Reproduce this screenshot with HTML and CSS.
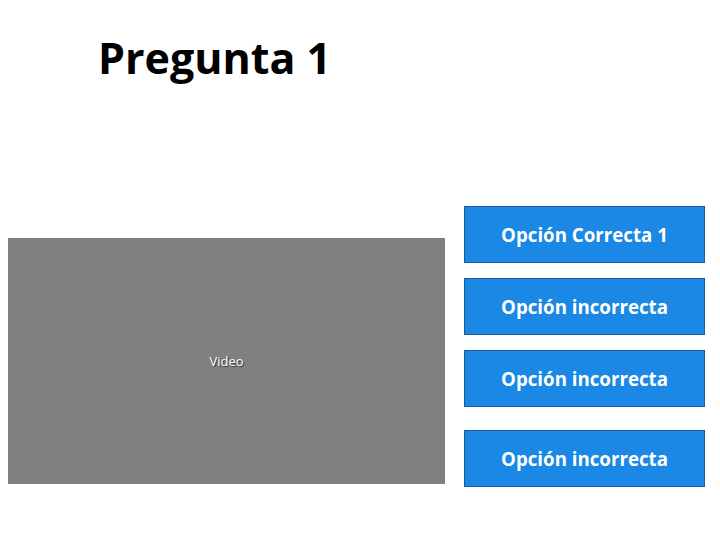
FILE: index.html
```html
<!DOCTYPE html>
<html lang="es">
<head>
<meta charset="utf-8">
<link rel="stylesheet" href="styles.css">
</head>
<body>
<h1 class="title">Pregunta 1</h1>
<div class="main">
  <div class="video"><span class="video-label">Video</span></div>
  <div class="options">
    <button class="option">Opción Correcta 1</button>
    <button class="option">Opción incorrecta</button>
    <button class="option">Opción incorrecta</button>
    <button class="option option-last">Opción incorrecta</button>
  </div>
</div>
</body>
</html>
```
FILE: styles.css
```css
html, body {
  margin: 0;
  padding: 0;
  background: #ffffff;
  width: 720px;
  height: 540px;
  overflow: hidden;
  font-family: "Open Sans", "Noto Sans", sans-serif;
}
.title {
  margin: 0;
  padding: 29px 0 0 98px;
  height: 57px;
  font-size: 43px;
  font-weight: 700;
  line-height: 57px;
  color: #000;
}
.main {
  display: flex;
  align-items: flex-start;
  padding: 120px 0 0 8px;
}
.video {
  margin-top: 32px;
  width: 437px;
  height: 246px;
  background: #808080;
  display: flex;
  align-items: center;
  justify-content: center;
}
.video-label {
  font-family: "Open Sans", sans-serif;
  font-size: 13px;
  color: #ffffff;
  text-shadow: 1px 1px 1px #333;
}
.options {
  margin-left: 19px;
  display: flex;
  flex-direction: column;
  gap: 15px;
}
.option {
  box-sizing: border-box;
  width: 241px;
  height: 57px;
  background: #1a88e4;
  border: 1px solid #14609f;
  color: #fff;
  font-family: "Open Sans", sans-serif;
  font-weight: 700;
  font-size: 18.7px;
  line-height: 24px;
  padding: 0;
  margin: 0;
}
.option-last {
  margin-top: 8px;
}
```
